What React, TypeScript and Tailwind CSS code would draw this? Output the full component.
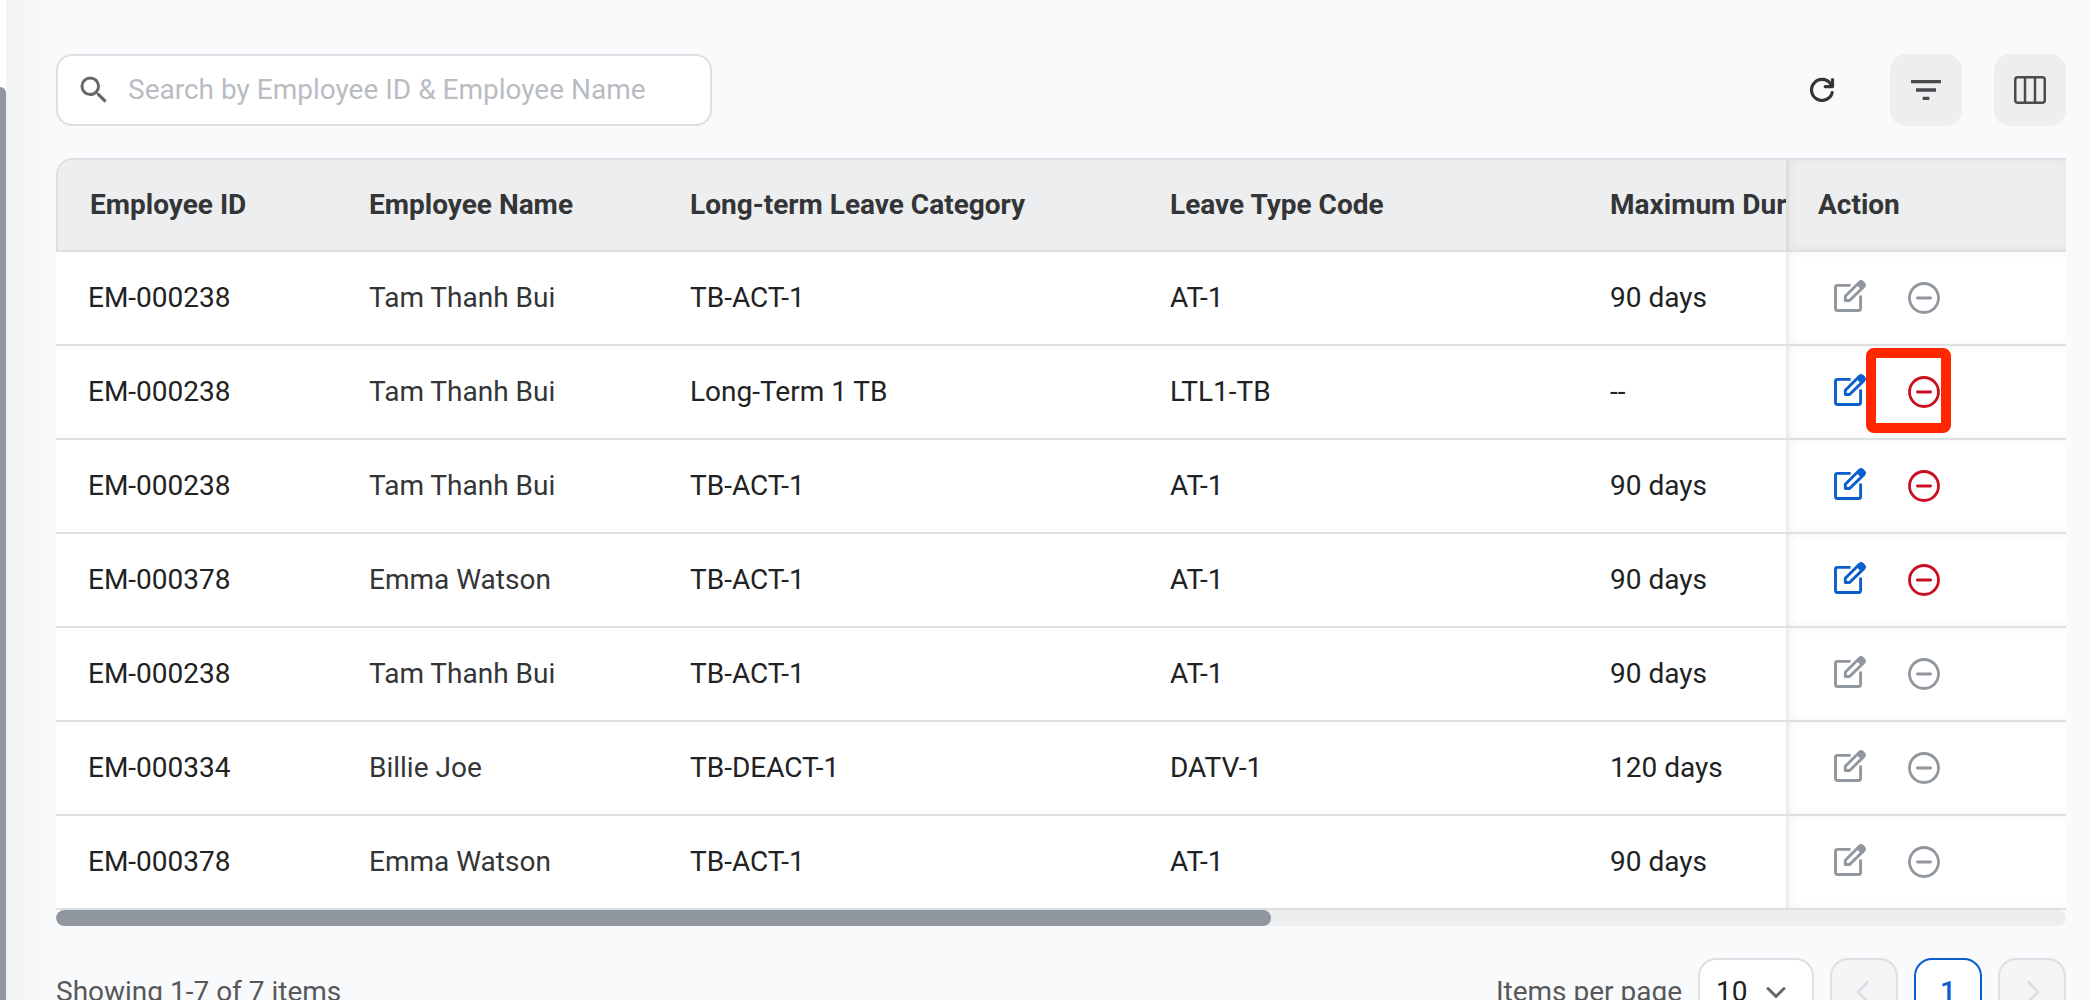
import { MdFilterList, MdSearch } from "react-icons/md";

const rows = [
  { id: "EM-000238", name: "Tam Thanh Bui", category: "TB-ACT-1", code: "AT-1", max: "90 days", active: false, marked: false },
  { id: "EM-000238", name: "Tam Thanh Bui", category: "Long-Term 1 TB", code: "LTL1-TB", max: "--", active: true, marked: true },
  { id: "EM-000238", name: "Tam Thanh Bui", category: "TB-ACT-1", code: "AT-1", max: "90 days", active: true, marked: false },
  { id: "EM-000378", name: "Emma Watson", category: "TB-ACT-1", code: "AT-1", max: "90 days", active: true, marked: false },
  { id: "EM-000238", name: "Tam Thanh Bui", category: "TB-ACT-1", code: "AT-1", max: "90 days", active: false, marked: false },
  { id: "EM-000334", name: "Billie Joe", category: "TB-DEACT-1", code: "DATV-1", max: "120 days", active: false, marked: false },
  { id: "EM-000378", name: "Emma Watson", category: "TB-ACT-1", code: "AT-1", max: "90 days", active: false, marked: false },
];

function EditIcon() {
  return (
    <svg viewBox="0 0 32 36" className="h-9 w-8" fill="none" stroke="currentColor" strokeWidth="2.9" strokeLinejoin="round" aria-hidden="true">
      <path d="M16.6 5.4H3.4Q1.5 5.4 1.5 7.3V28.6Q1.5 30.5 3.4 30.5H24.7Q26.6 30.5 26.6 28.6V15.4" />
      <path d="M11.3 20.5V16.3L25.4 2.3Q27 0.9 28.6 2.3L29.8 3.5Q31.2 5.1 29.8 6.6L15.6 20.5Z" />
      <path d="M22.6 5.1L27 9.4L29.8 6.6Q31.2 5.1 29.8 3.5L28.6 2.3Q27 0.9 25.4 2.3Z" fill="currentColor" stroke="none" />
    </svg>
  );
}

function MinusCircleIcon() {
  return (
    <svg viewBox="0 0 32 32" className="size-8" fill="none" stroke="currentColor" strokeWidth="2.8" strokeLinecap="round" aria-hidden="true">
      <circle cx="16" cy="16" r="14.5" />
      <path d="M9.4 16H22.6" />
    </svg>
  );
}

function RefreshIcon() {
  return (
    <svg viewBox="0 0 32 32" className="size-8" fill="none" stroke="currentColor" strokeWidth="3.2" strokeLinecap="round" strokeLinejoin="round" aria-hidden="true">
      <path d="M26.2 18.6A10.5 10.5 0 1 1 24.4 9.6L26.4 12" />
      <path d="M26.5 5.6V12.6H19.2" />
    </svg>
  );
}

function ColumnsIcon() {
  return (
    <svg viewBox="0 0 32 28" className="h-7 w-8" fill="none" stroke="currentColor" strokeWidth="2.5" aria-hidden="true">
      <rect x="1.25" y="1.25" width="29.5" height="25.5" rx="2.5" />
      <path d="M11 1V27M21 1V27" />
    </svg>
  );
}

function Chevron({ d, className }: { d: string; className: string }) {
  return (
    <svg viewBox="0 0 24 24" className={className} fill="none" stroke="currentColor" strokeWidth="3" strokeLinecap="round" strokeLinejoin="round" aria-hidden="true">
      <path d={d} />
    </svg>
  );
}

const head = "h-[94px] border-y-2 border-[#dddfe2] bg-[#edeef0] px-8 font-bold text-[#333537]";
const cell = "h-[94px] border-b-2 border-[#dddfe2] bg-white px-8";
const pinned = "sticky right-0 shadow-[inset_3px_0_0_rgba(0,0,0,0.03),inset_4px_0_8px_rgba(0,0,0,0.05)]";
const pageButton = "flex h-[68px] w-[68px] items-center justify-center rounded-[18px] border-2";

export default function App() {
  return (
    <div className="flex h-screen overflow-hidden bg-[#f9fafc] font-[Roboto,sans-serif] text-[28px] leading-10 text-[#202223]">
      <aside className="flex w-[6px] shrink-0 flex-col bg-white pt-[87px]">
        <div className="grow rounded-tr-[6px] bg-[#90979e]" />
      </aside>
      <div className="w-[50px] shrink-0 bg-linear-to-r from-[#f2f3f5] to-[#f9fafc]" />
      <main className="flex min-w-0 grow flex-col pt-[54px] pr-6">
        <div className="flex items-center justify-between">
          <label className="flex h-[72px] w-[656px] items-center gap-4 rounded-2xl border-2 border-[#dddfe2] bg-white px-[18px]">
            <MdSearch className="size-9 shrink-0 text-[#666769]" />
            <input
              type="text"
              aria-label="Search"
              placeholder="Search by Employee ID & Employee Name"
              className="min-w-0 grow bg-transparent outline-none placeholder:text-[#b8bdc3]"
            />
          </label>
          <div className="flex items-center gap-8">
            <button type="button" aria-label="Refresh" className="flex size-[72px] items-center justify-center text-[#333537]">
              <RefreshIcon />
            </button>
            <button type="button" aria-label="Filter" className="flex size-[72px] items-center justify-center rounded-2xl bg-[#edeef0] text-[#4a4b4d]">
              <MdFilterList className="size-10" />
            </button>
            <button type="button" aria-label="Columns" className="flex size-[72px] items-center justify-center rounded-2xl bg-[#edeef0] text-[#4a4b4d]">
              <ColumnsIcon />
            </button>
          </div>
        </div>

        <div className="mt-8 shrink-0 overflow-x-auto rounded-tl-2xl [scrollbar-width:none]">
          <table className="w-[3325px] table-fixed border-separate border-spacing-0 text-left">
            <colgroup>
              <col className="w-[281px]" />
              <col className="w-[321px]" />
              <col className="w-[480px]" />
              <col className="w-[440px]" />
              <col />
              <col className="w-[280px]" />
            </colgroup>
            <thead>
              <tr>
                <th className={`${head} rounded-tl-2xl border-l-2`}>Employee ID</th>
                <th className={head}>Employee Name</th>
                <th className={head}>Long-term Leave Category</th>
                <th className={head}>Leave Type Code</th>
                <th className={head}>Maximum Duration</th>
                <th className={`${head} ${pinned}`}>Action</th>
              </tr>
            </thead>
            <tbody>
              {rows.map((row, i) => (
                <tr key={i}>
                  <td className={cell}>{row.id}</td>
                  <td className={`${cell} text-[#333537]`}>{row.name}</td>
                  <td className={cell}>{row.category}</td>
                  <td className={cell}>{row.code}</td>
                  <td className={cell}>{row.max}</td>
                  <td className={`${cell} ${pinned}`}>
                    <div className="flex items-center gap-[42px] pl-4">
                      <button type="button" aria-label="Edit" disabled={!row.active} className={row.active ? "text-[#0b5fcc]" : "text-[#90979e]"}>
                        <EditIcon />
                      </button>
                      <div className="relative flex">
                        <button type="button" aria-label="Deactivate" disabled={!row.active} className={row.active ? "text-[#c90f20]" : "text-[#90979e]"}>
                          <MinusCircleIcon />
                        </button>
                        {row.marked && (
                          <span className="pointer-events-none absolute -top-7 -right-[11px] size-[85px] rounded-lg border-10 border-[#ff2600]" />
                        )}
                      </div>
                    </div>
                  </td>
                </tr>
              ))}
            </tbody>
          </table>
        </div>
        <div className="h-4 shrink-0 overflow-hidden rounded-full bg-[#edeef0]">
          <div className="h-full w-[60.45%] rounded-full bg-[#90979e]" />
        </div>

        <footer className="mt-8 flex shrink-0 items-center justify-between text-[#56585a]">
          <p>Showing 1-7 of 7 items</p>
          <div className="flex items-center gap-4">
            <label htmlFor="page-size">Items per page</label>
            <div className="relative flex">
              <select id="page-size" className="h-[68px] w-[116px] appearance-none rounded-[18px] border-2 border-[#dddfe2] bg-white pl-4 text-[#202223]">
                <option>10</option>
              </select>
              <Chevron d="M4 8.5L12 16.5L20 8.5" className="pointer-events-none absolute top-[22px] right-[26px] size-6 text-[#666769]" />
            </div>
            <button type="button" aria-label="Previous page" disabled className={`${pageButton} border-[#dddfe2] bg-[#f4f5f7] text-[#dddfe2]`}>
              <Chevron d="M15.5 2L6 12L15.5 22" className="size-6" />
            </button>
            <button type="button" aria-current="page" className={`${pageButton} border-[#0b5fcc] bg-white font-medium text-[#0b5fcc]`}>
              1
            </button>
            <button type="button" aria-label="Next page" disabled className={`${pageButton} border-[#dddfe2] bg-[#f4f5f7] text-[#dddfe2]`}>
              <Chevron d="M8.5 2L18 12L8.5 22" className="size-6" />
            </button>
          </div>
        </footer>
      </main>
    </div>
  );
}
